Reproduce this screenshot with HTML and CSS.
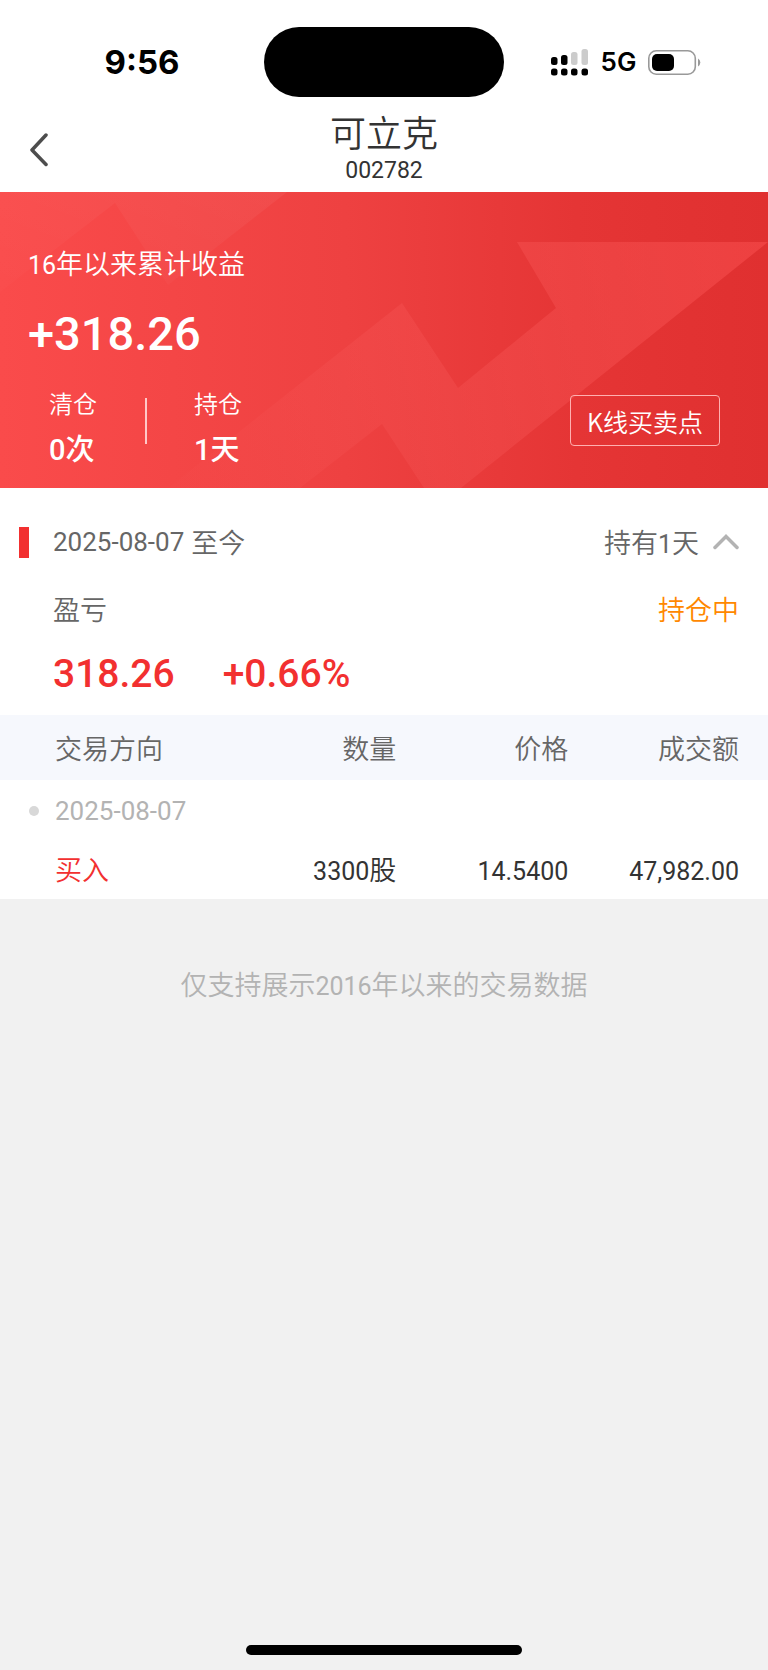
FILE: index.html
```html
<!DOCTYPE html>
<html lang="zh-CN">
<head>
<meta charset="utf-8">
<meta name="viewport" content="width=device-width, initial-scale=1">
<title>可立克 002782</title>
<link rel="stylesheet" href="styles.css">
</head>
<body>
<div class="status">
  <div class="status-side"><span class="time">9:56</span></div>
  <div class="island"></div>
  <div class="status-side">
    <svg class="signal" viewBox="0 0 38 27" aria-hidden="true">
      <g fill="#000"><rect x="0" y="8" width="6.500" height="8" rx="2.500"/><rect x="10" y="6" width="6.500" height="10" rx="2.500"/></g>
      <g fill="#ccc"><rect x="20" y="3" width="6.500" height="13" rx="2.500"/><rect x="30.500" y="0" width="6.500" height="16" rx="2.500"/></g>
      <g fill="#000"><rect x="0" y="19.500" width="6.500" height="7" rx="2.500"/><rect x="10" y="19.500" width="6.500" height="7" rx="2.500"/><rect x="20" y="19.500" width="6.500" height="7" rx="2.500"/><rect x="30.500" y="19.500" width="6.500" height="7" rx="2.500"/></g>
    </svg>
    <span class="network">5G</span>
    <svg class="battery" viewBox="0 0 53 25" aria-hidden="true">
      <rect x="0.800" y="0.800" width="46.500" height="23.400" rx="7.500" fill="none" stroke="#999" stroke-width="1.600"/>
      <rect x="4" y="4" width="22" height="17" rx="5" fill="#000"/>
      <path d="M50 8.500q2.300 1.500 2.300 4t-2.300 4z" fill="#999"/>
    </svg>
  </div>
</div>
<header class="nav">
  <button class="back" type="button" aria-label="返回">
    <svg viewBox="0 0 20 34" aria-hidden="true"><path d="M17 2 3 17 17 31.500" fill="none" stroke="#4d4d4d" stroke-width="3.500" stroke-linecap="round" stroke-linejoin="round"/></svg>
  </button>
  <div class="nav-title">
    <h1>可立克</h1>
    <p>002782</p>
  </div>
</header>
<main>
  <section class="hero">
    <svg class="hero-art" viewBox="0 0 768 296" preserveAspectRatio="none" aria-hidden="true">
      <defs>
        <linearGradient id="arrow" gradientUnits="userSpaceOnUse" x1="168" y1="296" x2="768" y2="50">
          <stop offset="0" stop-color="#ff6a6a" stop-opacity="0.030"/>
          <stop offset="0.350" stop-color="#ff6a6a" stop-opacity="0.160"/>
          <stop offset="1" stop-color="#ff5555" stop-opacity="0.450"/>
        </linearGradient>
        <linearGradient id="trail" x1="0" y1="1" x2="1" y2="0">
          <stop offset="0" stop-color="#fff" stop-opacity="0.010"/>
          <stop offset="1" stop-color="#fff" stop-opacity="0.050"/>
        </linearGradient>
      </defs>
      <path d="M0 0H287L168 93 115 11 0 100z" fill="url(#trail)"/>
      <path d="M168 296 402 111 458 196 556 116 517 50H768L461 296H424L382 232 300 296z" fill="url(#arrow)"/>
    </svg>
    <p class="hero-label"><span class="num">16</span>年以来累计收益</p>
    <p class="hero-value">+318.26</p>
    <div class="hero-foot">
      <dl class="stats">
        <div class="stat"><dt>清仓</dt><dd><span class="count">0</span>次</dd></div>
        <div class="stat"><dt>持仓</dt><dd><span class="count">1</span>天</dd></div>
      </dl>
      <button class="kline" type="button">K线买卖点</button>
    </div>
  </section>
  <section class="position">
    <div class="period">
      <h2><span class="date">2025-08-07</span> 至今</h2>
      <button class="toggle" type="button" aria-expanded="true"><span>持有<span class="num">1</span>天</span>
        <svg viewBox="0 0 26 16" aria-hidden="true"><path d="M2 13.500 13 2.500 24 13.500" fill="none" stroke="#b3b3b3" stroke-width="3.500" stroke-linecap="round" stroke-linejoin="miter"/></svg>
      </button>
    </div>
    <div class="profit-head"><span>盈亏</span><span class="holding">持仓中</span></div>
    <div class="profit"><span>318.26</span><span>+0.66%</span></div>
    <table class="trades">
      <thead><tr><th class="side">交易方向</th><th class="amount">数量</th><th class="price">价格</th><th class="total">成交额</th></tr></thead>
      <tbody>
        <tr class="day"><td colspan="4"><span class="date">2025-08-07</span></td></tr>
        <tr><td class="buy">买入</td><td><span class="num">3300</span>股</td><td><span class="num">14.5400</span></td><td><span class="num">47,982.00</span></td></tr>
      </tbody>
    </table>
  </section>
  <p class="note">仅支持展示<span class="num">2016</span>年以来的交易数据</p>
</main>
<div class="home"></div>
</body>
</html>
```
FILE: styles.css
```css
* {
  box-sizing: border-box;
  margin: 0;
  padding: 0;
}

body {
  display: flex;
  flex-direction: column;
  min-height: 100vh;
  background: #f1f1f1;
  color: #666;
  font-family: "Noto Sans CJK SC", sans-serif;
  font-size: 27px;
  font-weight: 350;
  line-height: 40px;
}

button {
  border: 0;
  background: none;
  color: inherit;
  font: inherit;
  cursor: pointer;
}

h1, h2, th {
  font-size: inherit;
  font-weight: inherit;
}

svg {
  display: block;
}

.num,
.date,
.count {
  font-family: Roboto, sans-serif;
  line-height: 1;
}

.num {
  font-size: 25px;
  font-weight: 400;
}

.date {
  font-size: 26px;
  font-weight: 400;
}

.status {
  display: grid;
  grid-template-columns: 1fr 240px 1fr;
  align-items: center;
  height: 109px;
  padding-top: 15px;
  background: #fff;
  color: #000;
  font-family: Inter, sans-serif;
}

.status-side {
  display: flex;
  align-items: center;
  justify-content: center;
}

.status-side:first-child {
  padding-left: 20px;
}

.status-side:last-child {
  gap: 12px;
  padding-right: 20px;
}

.time {
  font-size: 33px;
  font-weight: 700;
}

.island {
  height: 70px;
  border-radius: 35px;
  background: #000;
}

.signal {
  width: 38px;
  height: 27px;
}

.network {
  font-size: 26px;
  font-weight: 600;
}

.battery {
  width: 53px;
  height: 25px;
}

.nav {
  display: grid;
  grid-template-columns: 80px 1fr 80px;
  height: 83px;
  background: #fff;
  color: #333;
}

.back {
  display: flex;
  align-items: center;
  padding: 0 0 2px 29px;
}

.back svg {
  width: 20px;
  height: 34px;
}

.nav-title {
  text-align: center;
}

.nav-title h1 {
  font-size: 36px;
  line-height: 45px;
}

.nav-title p {
  font-family: Roboto, sans-serif;
  font-size: 23px;
  font-weight: 400;
  line-height: 34px;
}

.hero {
  position: relative;
  height: 296px;
  padding: 51px 48px 0 28px;
  background: linear-gradient(90deg, #fa4b4b, #ee4141 45%, #e53535 75%, #e03030);
  color: #fff;
}

.hero > * {
  position: relative;
}

.hero .hero-art {
  position: absolute;
  inset: 0;
  width: 100%;
  height: 100%;
}

.hero-value {
  margin-top: 23px;
  font-family: Roboto, sans-serif;
  font-size: 47px;
  font-weight: 500;
  line-height: 56px;
}

.hero-foot {
  display: flex;
  align-items: flex-start;
  justify-content: space-between;
  margin-top: 21px;
}

.stats {
  display: flex;
}

.stat {
  position: relative;
  width: 145px;
  padding-left: 21px;
}

.stat:first-child::after {
  content: "";
  position: absolute;
  top: 15px;
  right: 26px;
  width: 2px;
  height: 46px;
  background: #ffc8c8;
}

.stat dt {
  font-size: 24px;
}

.stat dd {
  font-size: 29px;
  font-weight: 500;
  line-height: 48px;
}

.kline {
  height: 51px;
  margin-top: 12px;
  padding: 0 16px;
  border: 1px solid #ffb0b0;
  border-radius: 4px;
  font-size: 25px;
}

.position {
  background: #fff;
}

.period,
.profit-head {
  display: flex;
  align-items: center;
  justify-content: space-between;
  padding: 0 29px 0 53px;
}

.period {
  padding-top: 34px;
  padding-left: 19px;
}

.period h2 {
  display: flex;
  align-items: center;
  gap: 7px;
}

.period h2::before {
  content: "";
  width: 10px;
  height: 31px;
  margin-right: 17px;
  background: #f23030;
}

.toggle {
  display: flex;
  align-items: center;
}

.toggle svg {
  width: 26px;
  height: 16px;
  margin-left: 14px;
}

.profit-head {
  padding-top: 27px;
}

.holding {
  color: #ff8800;
}

.profit {
  display: flex;
  gap: 48px;
  padding: 16px 53px 12px;
  color: #f23030;
  font-family: Roboto, sans-serif;
  font-size: 39px;
  font-weight: 500;
  line-height: 58px;
}

.trades {
  width: 100%;
  table-layout: fixed;
  border-collapse: collapse;
  text-align: right;
}

.trades th {
  height: 65px;
  background: #f6f8fd;
}

.trades td {
  height: 59px;
  padding-bottom: 2px;
  color: #333;
}

.trades .side {
  width: 29.200%;
}

.trades .amount,
.trades .price {
  width: 22.400%;
}

.trades th:first-child,
.trades td:first-child {
  padding-left: 55px;
  text-align: left;
}

.trades th:last-child,
.trades td:last-child {
  padding-right: 29px;
}

.trades .day td {
  height: 60px;
  padding-left: 29px;
  color: #b3b3b3;
}

.day td::before {
  content: "";
  display: inline-block;
  width: 10px;
  height: 10px;
  margin: 0 16px 4px 0;
  border-radius: 50%;
  background: #d8d8d8;
  vertical-align: middle;
}

.trades .buy {
  color: #f23030;
}

.note {
  padding-top: 65px;
  color: #b3b3b3;
  text-align: center;
}

.home {
  width: 276px;
  height: 10px;
  margin: auto auto 15px;
  border-radius: 5px;
  background: #000;
}
```
